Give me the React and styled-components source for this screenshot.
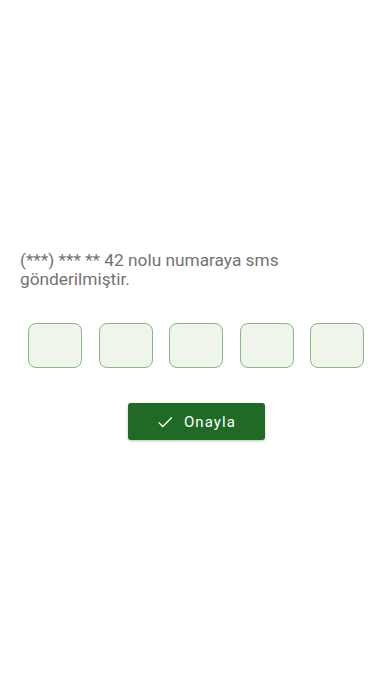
import styled, { createGlobalStyle } from "styled-components";

const GlobalStyle = createGlobalStyle`
  html, body {
    margin: 0;
    padding: 0;
    background: #ffffff;
    font-family: Roboto, "Noto Sans", sans-serif;
  }
`;

const Page = styled.div`
  min-height: 696px;
  display: flex;
  flex-direction: column;
  justify-content: center;
  padding: 0 20px 5px;
  box-sizing: border-box;
`;

const Message = styled.p`
  margin: 0;
  font-size: 17.3px;
  line-height: 19px;
  color: #737373;
  padding-right: 20px;
`;

const CodeRow = styled.div`
  display: flex;
  justify-content: center;
  gap: 16.5px;
  margin-top: 34px;
`;

const CodeBox = styled.input`
  width: 54px;
  height: 45px;
  box-sizing: border-box;
  border: 1px solid #86b983;
  border-radius: 8px;
  background: #eff5ea;
  outline: none;
  text-align: center;
  font-size: 20px;
  font-family: inherit;
  padding: 0;
`;

const Button = styled.button`
  align-self: center;
  margin-top: 35px;
  width: 137px;
  height: 37px;
  display: flex;
  align-items: center;
  justify-content: center;
  gap: 10px;
  background: #1f6b26;
  color: #ffffff;
  border: none;
  border-radius: 3px;
  box-shadow: 0 1px 3px rgba(0, 0, 0, 0.25);
  font-family: Roboto, sans-serif;
  font-size: 15px;
  letter-spacing: 1.1px;
  cursor: pointer;
  padding: 0;
`;

const App = () => {
  return (
    <>
      <GlobalStyle />
      <Page>
        <Message>(***) *** ** 42 nolu numaraya sms gönderilmiştir.</Message>
        <CodeRow>
          {[0, 1, 2, 3, 4].map((i) => (
            <CodeBox key={i} maxLength={1} />
          ))}
        </CodeRow>
        <Button>
          <svg width="18" height="18" viewBox="0 0 24 24" fill="none" stroke="#fff" strokeWidth="1.7">
            <path d="M3.5 12.5l5.5 5.5L21 6" />
          </svg>
          Onayla
        </Button>
      </Page>
    </>
  );
};

export default App;
